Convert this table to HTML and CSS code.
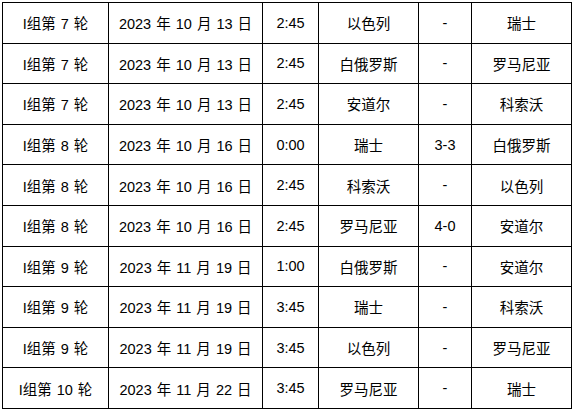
FILE: index.html
```html
<!DOCTYPE html>
<html lang="zh">
<head>
<meta charset="utf-8">
<link rel="stylesheet" href="styles.css">
</head>
<body>
<table class="schedule">
  <colgroup>
    <col class="c-round"><col class="c-date"><col class="c-time"><col class="c-team"><col class="c-score"><col class="c-team">
  </colgroup>
  <tbody>
    <tr><td>I组第 7 轮</td><td>2023 年 10 月 13 日</td><td>2:45</td><td>以色列</td><td>-</td><td>瑞士</td></tr>
    <tr><td>I组第 7 轮</td><td>2023 年 10 月 13 日</td><td>2:45</td><td>白俄罗斯</td><td>-</td><td>罗马尼亚</td></tr>
    <tr><td>I组第 7 轮</td><td>2023 年 10 月 13 日</td><td>2:45</td><td>安道尔</td><td>-</td><td>科索沃</td></tr>
    <tr><td>I组第 8 轮</td><td>2023 年 10 月 16 日</td><td>0:00</td><td>瑞士</td><td>3-3</td><td>白俄罗斯</td></tr>
    <tr><td>I组第 8 轮</td><td>2023 年 10 月 16 日</td><td>2:45</td><td>科索沃</td><td>-</td><td>以色列</td></tr>
    <tr><td>I组第 8 轮</td><td>2023 年 10 月 16 日</td><td>2:45</td><td>罗马尼亚</td><td>4-0</td><td>安道尔</td></tr>
    <tr><td>I组第 9 轮</td><td>2023 年 11 月 19 日</td><td>1:00</td><td>白俄罗斯</td><td>-</td><td>安道尔</td></tr>
    <tr><td>I组第 9 轮</td><td>2023 年 11 月 19 日</td><td>3:45</td><td>瑞士</td><td>-</td><td>科索沃</td></tr>
    <tr><td>I组第 9 轮</td><td>2023 年 11 月 19 日</td><td>3:45</td><td>以色列</td><td>-</td><td>罗马尼亚</td></tr>
    <tr><td>I组第 10 轮</td><td>2023 年 11 月 22 日</td><td>3:45</td><td>罗马尼亚</td><td>-</td><td>瑞士</td></tr>
  </tbody>
</table>
</body>
</html>
```
FILE: styles.css
```css
html, body {
  margin: 0;
  padding: 0;
  background: #ffffff;
}
body {
  padding: 2px 0 0 2px;
  font-family: "Liberation Sans", "Noto Sans CJK SC", sans-serif;
  font-size: 14.5px;
  word-spacing: 1px;
  color: #000000;
}
.schedule {
  border-collapse: collapse;
  table-layout: fixed;
  width: 570px;
}
.c-round { width: 106px; }
.c-date { width: 154px; }
.c-time { width: 56px; }
.c-team { width: 100px; }
.c-score { width: 53px; }
.schedule tr {
  height: 40.6px;
}
.schedule td {
  border: 1px solid #000000;
  text-align: center;
  vertical-align: middle;
  padding: 0;
  white-space: nowrap;
}
```
